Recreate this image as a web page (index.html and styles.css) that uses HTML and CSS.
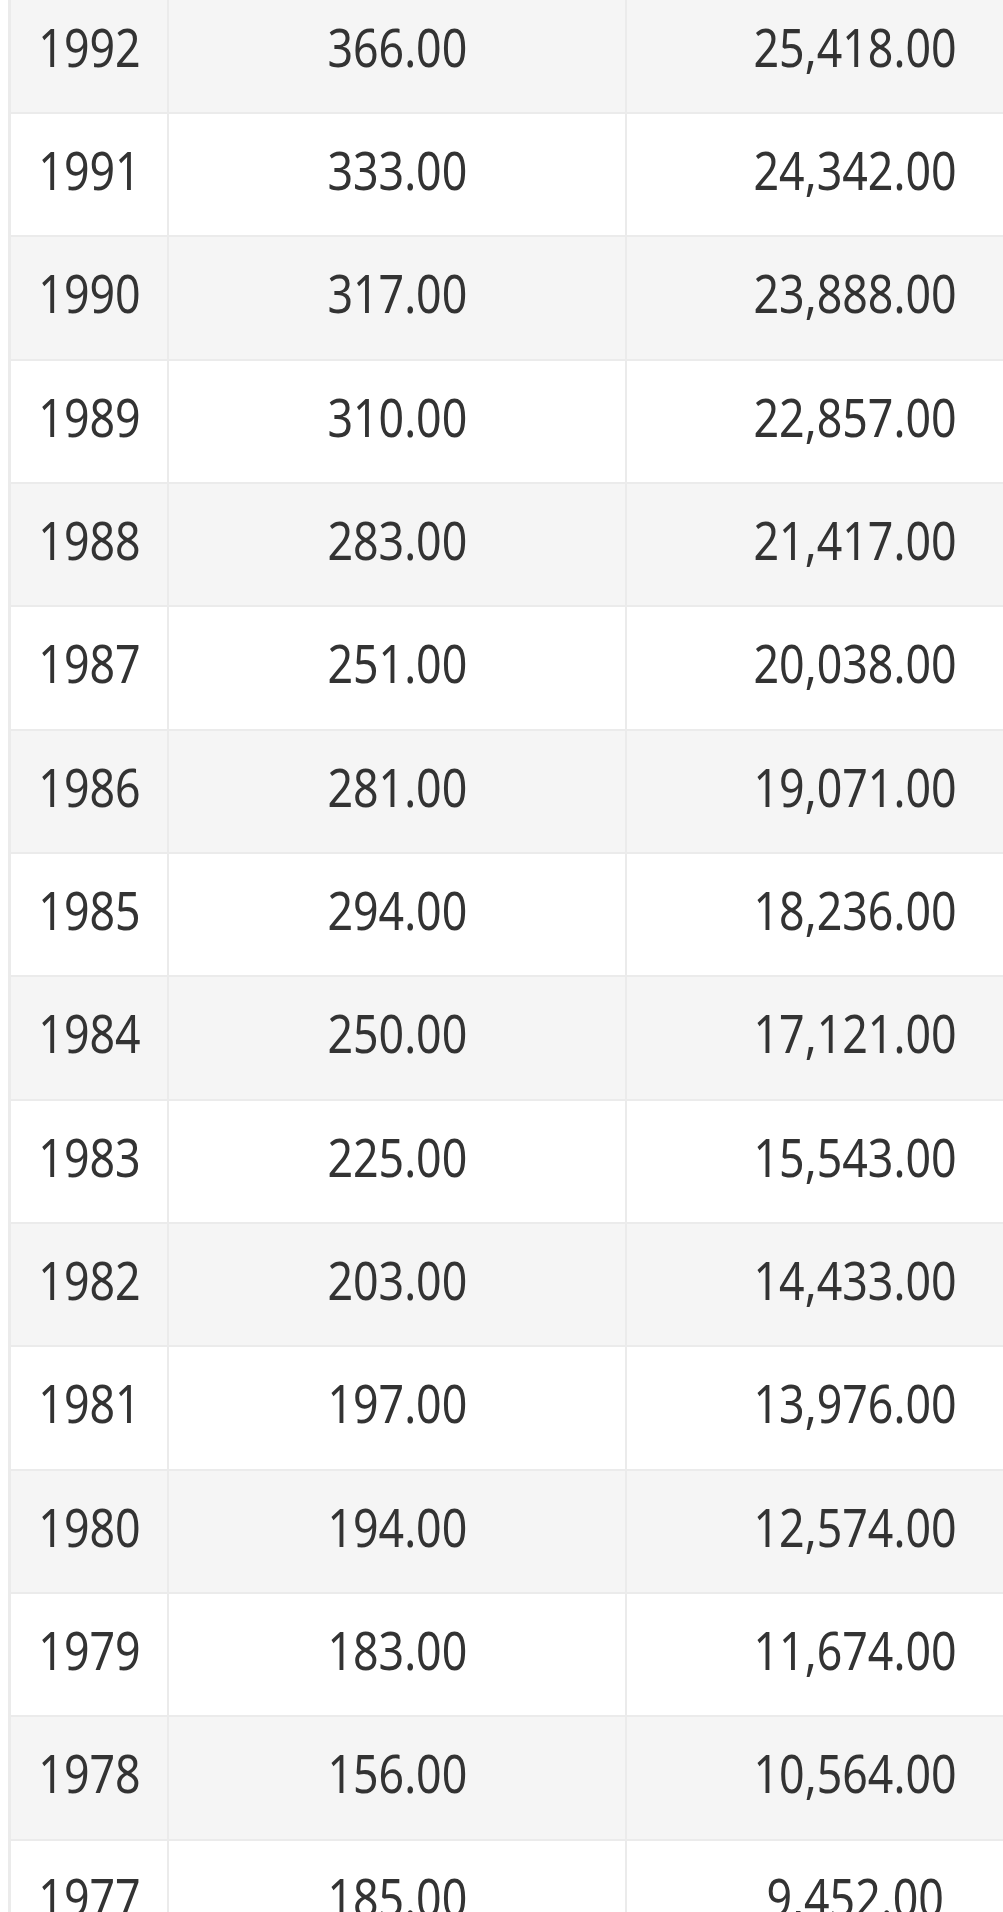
FILE: index.html
```html
<!DOCTYPE html>
<html lang="en">
<head>
<meta charset="utf-8">
<title>Table</title>
<link rel="stylesheet" href="styles.css">
</head>
<body>
<div class="table">
  <div class="row shade"><div class="cell"><span class="num">1992</span></div><div class="cell"><span class="num">366.00</span></div><div class="cell"><span class="num">25,418.00</span></div></div>
  <div class="row"><div class="cell"><span class="num">1991</span></div><div class="cell"><span class="num">333.00</span></div><div class="cell"><span class="num">24,342.00</span></div></div>
  <div class="row shade"><div class="cell"><span class="num">1990</span></div><div class="cell"><span class="num">317.00</span></div><div class="cell"><span class="num">23,888.00</span></div></div>
  <div class="row"><div class="cell"><span class="num">1989</span></div><div class="cell"><span class="num">310.00</span></div><div class="cell"><span class="num">22,857.00</span></div></div>
  <div class="row shade"><div class="cell"><span class="num">1988</span></div><div class="cell"><span class="num">283.00</span></div><div class="cell"><span class="num">21,417.00</span></div></div>
  <div class="row"><div class="cell"><span class="num">1987</span></div><div class="cell"><span class="num">251.00</span></div><div class="cell"><span class="num">20,038.00</span></div></div>
  <div class="row shade"><div class="cell"><span class="num">1986</span></div><div class="cell"><span class="num">281.00</span></div><div class="cell"><span class="num">19,071.00</span></div></div>
  <div class="row"><div class="cell"><span class="num">1985</span></div><div class="cell"><span class="num">294.00</span></div><div class="cell"><span class="num">18,236.00</span></div></div>
  <div class="row shade"><div class="cell"><span class="num">1984</span></div><div class="cell"><span class="num">250.00</span></div><div class="cell"><span class="num">17,121.00</span></div></div>
  <div class="row"><div class="cell"><span class="num">1983</span></div><div class="cell"><span class="num">225.00</span></div><div class="cell"><span class="num">15,543.00</span></div></div>
  <div class="row shade"><div class="cell"><span class="num">1982</span></div><div class="cell"><span class="num">203.00</span></div><div class="cell"><span class="num">14,433.00</span></div></div>
  <div class="row"><div class="cell"><span class="num">1981</span></div><div class="cell"><span class="num">197.00</span></div><div class="cell"><span class="num">13,976.00</span></div></div>
  <div class="row shade"><div class="cell"><span class="num">1980</span></div><div class="cell"><span class="num">194.00</span></div><div class="cell"><span class="num">12,574.00</span></div></div>
  <div class="row"><div class="cell"><span class="num">1979</span></div><div class="cell"><span class="num">183.00</span></div><div class="cell"><span class="num">11,674.00</span></div></div>
  <div class="row shade"><div class="cell"><span class="num">1978</span></div><div class="cell"><span class="num">156.00</span></div><div class="cell"><span class="num">10,564.00</span></div></div>
  <div class="row"><div class="cell"><span class="num">1977</span></div><div class="cell"><span class="num">185.00</span></div><div class="cell"><span class="num">9,452.00</span></div></div>
</div>
</body>
</html>
```
FILE: styles.css
```css
html, body {
  overflow: hidden;
  background: #ffffff;
}
body {
  margin: 0 0 0 8px;
  font-family: "Noto Sans", sans-serif;
  color: #333333;
}
.table {
  margin-top: -9.33px;
  display: flex;
  flex-direction: column;
  row-gap: 2px;
  padding-left: 3px;
  background: #ebebeb;
  width: max-content;
}
.row {
  display: grid;
  grid-template-columns: 156px 456px 456px;
  column-gap: 2px;
  height: 121.33px;
}
.cell {
  background: #ffffff;
  display: flex;
  align-items: center;
  justify-content: center;
  font-size: 52px;
  line-height: 1;
  padding-bottom: 9px;
  box-sizing: border-box;
}
.shade .cell {
  background: #f5f5f5;
}
.num {
  display: inline-block;
  transform: scaleX(0.86);
}
```
